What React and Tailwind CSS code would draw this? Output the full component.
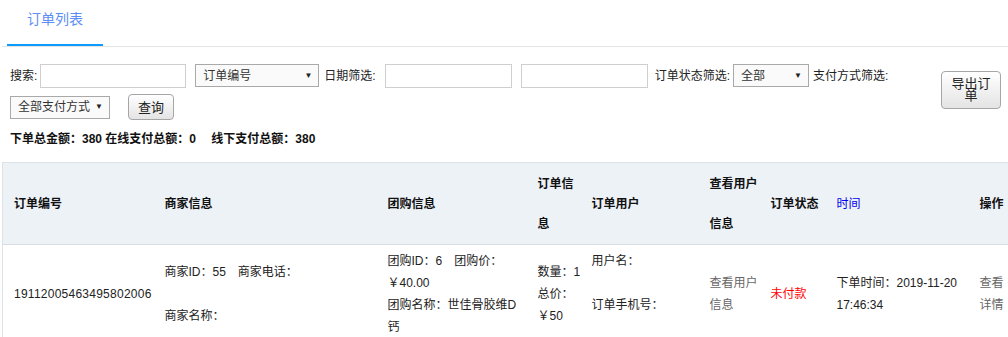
import React from "react";

const FONT = { fontFamily: '"Liberation Sans", Arial, "Noto Sans CJK SC", sans-serif' };

function FakeSelect({ w, label, className = "" }) {
  return (
    <div
      className={`flex items-center justify-between h-[23px] border border-[#a9a9a9] bg-[#fafafa] pl-[7px] pr-[6px] text-[12px] text-[#333] whitespace-nowrap overflow-hidden ${className}`}
      style={{ width: w }}
    >
      <span className="leading-[21px] pt-[1px]">{label}</span>
      <span className="text-[8px] text-[#222] leading-none">▼</span>
    </div>
  );
}

export default function App() {
  const cols = [151, 223, 150, 54, 118, 61, 66, 143, 41];
  return (
    <div className="w-[1008px] h-[337px] overflow-hidden bg-white text-[#222]" style={FONT}>
      {/* Tabs */}
      <div className="ml-[2px] h-[47px] border-b border-[#e4e4e4] pl-[5px]">
        <div className="w-[96px] h-[46px] border-b-2 border-[#0d9bff] pt-[9px] text-center text-[14px] leading-[20px] text-[#5c8ef6]">
          订单列表
        </div>
      </div>

      {/* Filters */}
      <div className="flex pl-[10px] pt-[17px]">
        <div className="flex-1">
          <div className="flex items-center h-[24px] text-[12px] text-[#222] whitespace-nowrap">
            <span>搜索:</span>
            <div className="ml-[3px] w-[146px] h-[24px] border border-[#cfcfcf] bg-white" />
            <FakeSelect w={124} label="订单编号" className="ml-[9px] self-start" />
            <span className="ml-[5px]">日期筛选:</span>
            <div className="ml-[9px] w-[127px] h-[24px] border border-[#cfcfcf] bg-white" />
            <div className="ml-[9px] w-[127px] h-[24px] border border-[#cfcfcf] bg-white" />
            <span className="ml-[7px]">订单状态筛选:</span>
            <FakeSelect w={76} label="全部" className="ml-[3px] self-start" />
            <span className="ml-[4px]">支付方式筛选:</span>
          </div>
          <div className="flex items-center mt-[6px]">
            <FakeSelect w={100} label="全部支付方式" />
            <button className="ml-[18px] w-[46px] h-[26px] rounded-[4px] border border-[#a6a6a6] bg-gradient-to-b from-white to-[#e4e4e4] text-[13px] text-[#222] leading-none">
              查询
            </button>
          </div>
        </div>
        <div className="pt-[7px] pr-[7px]">
          <button className="w-[60px] h-[38px] rounded-[4px] border border-[#a6a6a6] bg-gradient-to-b from-white to-[#e4e4e4] px-[6px] text-[13px] leading-[12px] text-[#222]">
            导出订单
          </button>
        </div>
      </div>

      {/* Summary */}
      <div className="pl-[10px] mt-[12px] text-[12px] font-bold leading-[14px] text-[#111] whitespace-pre">
        下单总金额：380 在线支付总额：0　 线下支付总额：380
      </div>

      {/* Table */}
      <div className="mt-[16px] ml-[2px]">
        <table className="table-fixed border-collapse w-[1007px] border-l border-t border-[#dde2e8] text-[12px]">
          <colgroup>
            {cols.map((c, i) => (
              <col key={i} style={{ width: c }} />
            ))}
          </colgroup>
          <thead>
            <tr className="bg-[#edf2f7] border-b border-[#d9dee5]">
              {[
                ["订单编号"],
                ["商家信息"],
                ["团购信息"],
                ["订单信", "息"],
                ["订单用户"],
                ["查看用户", "信息"],
                ["订单状态"],
                ["时间"],
                ["操作"],
              ].map((lines, i) => (
                <th
                  key={i}
                  className={`h-[82px] p-0 pl-[11px] text-left align-middle font-bold leading-[40px] whitespace-nowrap ${
                    i === 7 ? "text-[#0000ee] font-normal" : "text-[#111]"
                  }`}
                >
                  {lines.map((l, j) => (
                    <div key={j}>{l}</div>
                  ))}
                </th>
              ))}
            </tr>
          </thead>
          <tbody>
            <tr className="text-[#222] leading-[22px]">
              <td className="pl-[11px] py-[5px] align-middle tracking-[0.25px]">19112005463495802006</td>
              <td className="pl-[11px] py-[5px] align-middle whitespace-nowrap">
                <div>商家ID：55　商家电话：</div>
                <div className="h-[22px]" />
                <div>商家名称：</div>
              </td>
              <td className="pl-[11px] py-[5px] align-middle whitespace-nowrap">
                <div>团购ID：6　团购价：</div>
                <div>￥40.00</div>
                <div>团购名称：世佳骨胶维D</div>
                <div>钙</div>
              </td>
              <td className="pl-[11px] py-[5px] align-middle whitespace-nowrap">
                <div>数量：1</div>
                <div>总价：</div>
                <div>￥50</div>
              </td>
              <td className="pl-[11px] py-[5px] align-middle whitespace-nowrap">
                <div>用户名：</div>
                <div className="h-[22px]" />
                <div>订单手机号：</div>
                <div className="h-[22px]" />
              </td>
              <td className="pl-[11px] py-[5px] align-middle whitespace-nowrap text-[#666]">
                <div>查看用户</div>
                <div>信息</div>
              </td>
              <td className="pl-[11px] py-[5px] align-middle whitespace-nowrap text-[#ff0000]">未付款</td>
              <td className="pl-[11px] py-[5px] align-middle whitespace-nowrap">
                <div>下单时间：2019-11-20</div>
                <div>17:46:34</div>
              </td>
              <td className="pl-[11px] py-[5px] align-middle whitespace-nowrap text-[#666]">
                <div>查看</div>
                <div>详情</div>
              </td>
            </tr>
          </tbody>
        </table>
      </div>
    </div>
  );
}
